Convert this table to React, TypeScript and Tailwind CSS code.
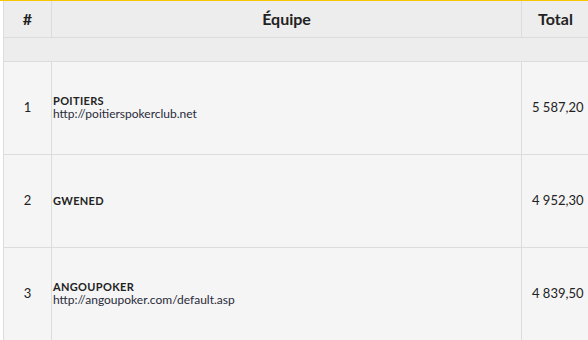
import React from "react";

const rows = [
  { rank: "1", name: "POITIERS", url: "http://poitierspokerclub.net", total: "5 587,20" },
  { rank: "2", name: "GWENED", url: "", total: "4 952,30" },
  { rank: "3", name: "ANGOUPOKER", url: "http://angoupoker.com/default.asp", total: "4 839,50" },
];

export default function App() {
  return (
    <div
      className="w-[588px] h-[340px] overflow-hidden bg-white border-t border-[#f7c600] pl-[3px]"
      style={{ fontFamily: "Lato, 'Open Sans', sans-serif" }}
    >
      <div className="w-[600px] border-l border-[#dcdcdc] text-[#222]">
        <div className="flex h-[37px] bg-[#ededed] border-b border-[#dcdcdc] font-bold text-[16px]">
          <div className="w-[48px] shrink-0 border-r border-[#dcdcdc] flex items-center justify-center">#</div>
          <div className="w-[470px] shrink-0 border-r border-[#dcdcdc] flex items-center justify-center">Équipe</div>
          <div className="w-[67px] shrink-0 flex items-center justify-center">Total</div>
        </div>
        <div className="h-[24px] bg-[#ededed] border-b border-[#dcdcdc]" />
        {rows.map((r) => (
          <div key={r.rank} className="flex h-[93px] bg-[#f5f5f5] border-b border-[#dcdcdc]">
            <div className="w-[48px] shrink-0 border-r border-[#dcdcdc] flex items-center justify-center text-[13px]">
              {r.rank}
            </div>
            <div className="w-[470px] shrink-0 border-r border-[#dcdcdc] flex flex-col justify-center pl-[1px]">
              <div className="text-[11px] font-bold tracking-[0.03em] leading-[12px]">{r.name}</div>
              {r.url && <div className="text-[12px] leading-[14px] text-[#2a2a3a]">{r.url}</div>}
            </div>
            <div className="w-[67px] shrink-0 flex items-center pl-[10px] text-[13px]">{r.total}</div>
          </div>
        ))}
      </div>
    </div>
  );
}
